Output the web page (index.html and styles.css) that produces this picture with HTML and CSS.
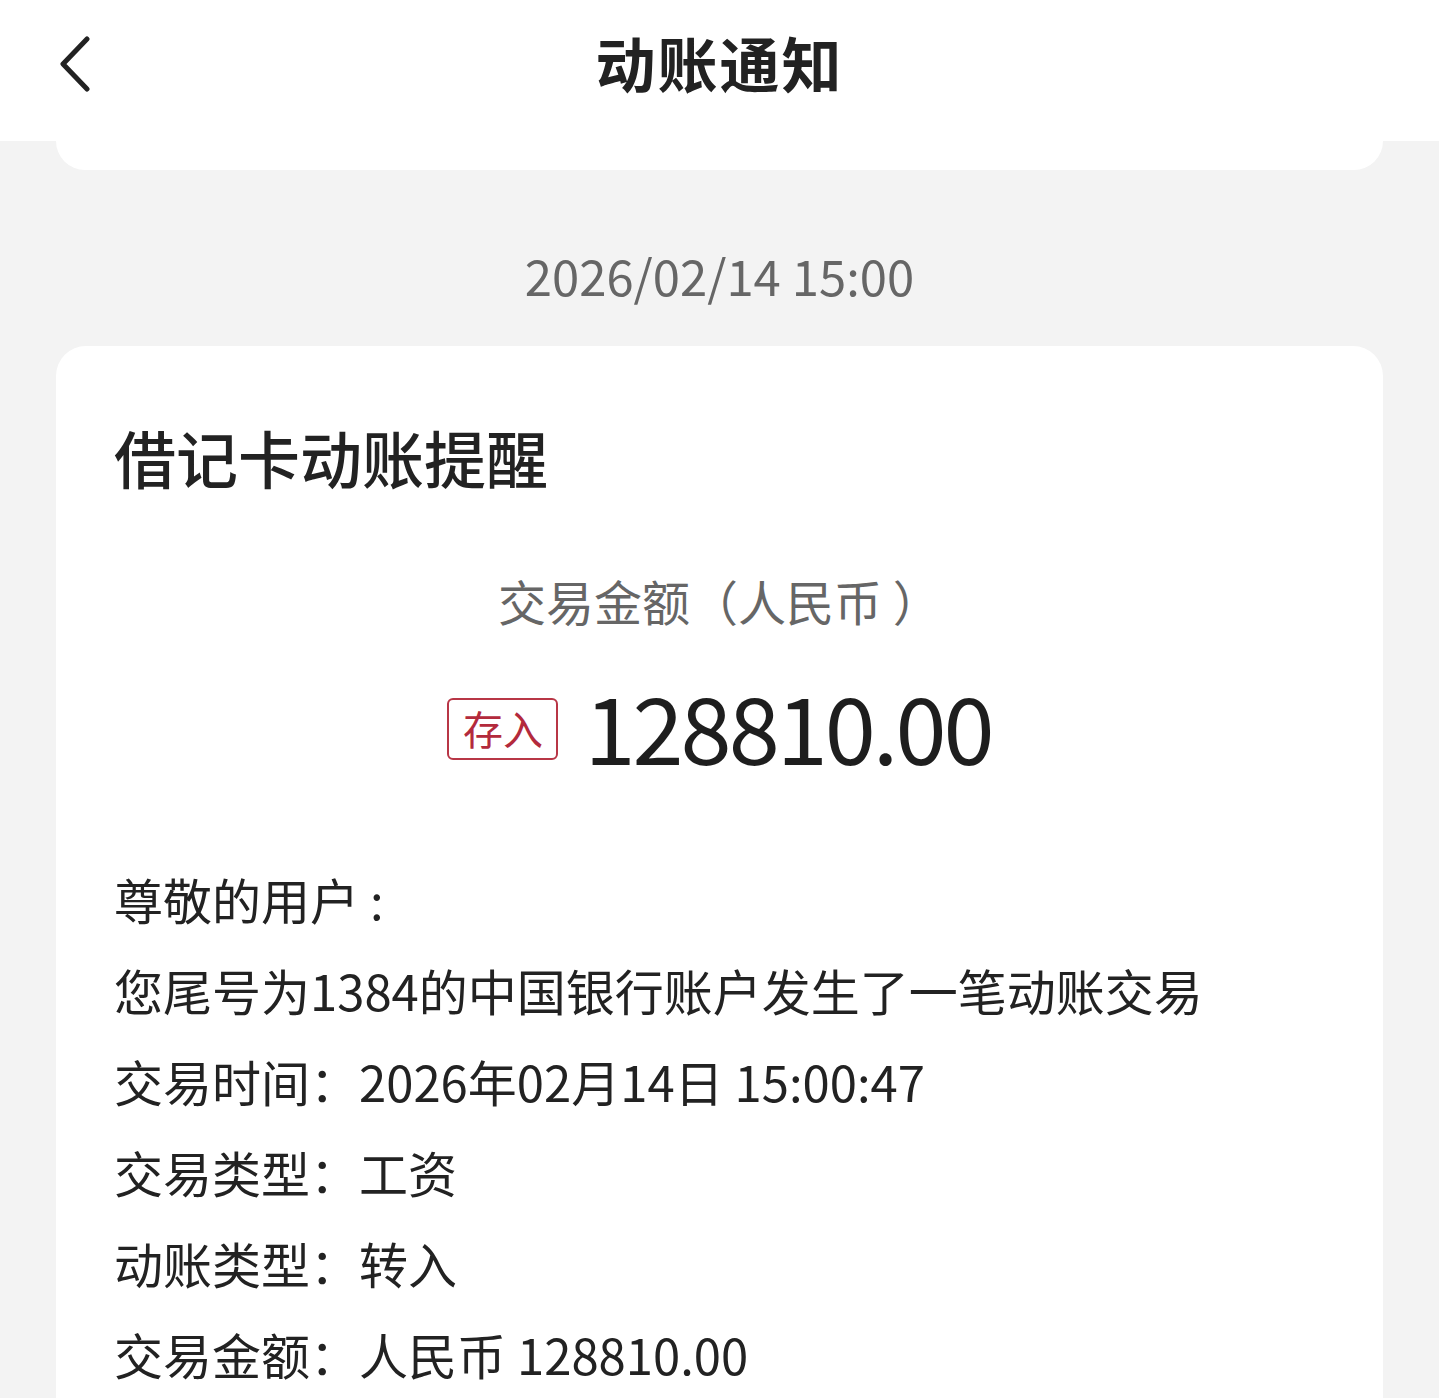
FILE: index.html
```html
<!DOCTYPE html>
<html>
  <head>
    <meta charset="utf-8">
    <meta name="viewport" content="width=device-width, initial-scale=1">
    <title>动账通知</title>
    <link rel="stylesheet" href="styles.css">
  </head>
  <body>
    <header class="topbar">
      <a class="back" href="#" aria-label="返回">
        <svg width="34" height="56" viewBox="0 0 34 56"><path d="M29 3 L5 28 L29 53" fill="none" stroke="#222" stroke-width="5" stroke-linecap="round" stroke-linejoin="round"/></svg>
      </a>
      <h1>动账通知</h1>
      <span></span>
    </header>
    <div class="prev-card"></div>
    <p class="stamp">2026/02/14 15:00</p>
    <section class="card">
      <h2>借记卡动账提醒</h2>
      <p class="label">交易金额（人民币 ）</p>
      <div class="amount">
        <span class="badge">存入</span>
        <span class="value">128810.00</span>
      </div>
      <div class="lines">
        <p>尊敬的用户 :</p>
        <p>您尾号为1384的中国银行账户发生了一笔动账交易</p>
        <p>交易时间：<span class="v">2026年02月14日 15:00:47</span></p>
        <p>交易类型：<span class="v">工资</span></p>
        <p>动账类型：<span class="v">转入</span></p>
        <p>交易金额：<span class="v">人民币 128810.00</span></p>
      </div>
    </section>
  </body>
</html>
```

FILE: styles.css
```css
body {
  margin: 0;
  background: #f3f3f3;
  font-family: "Noto Sans CJK SC", "Noto Sans", sans-serif;
  color: #222;
}

.topbar {
  height: 141px;
  background: #fff;
  display: grid;
  grid-template-columns: 1fr auto 1fr;
  align-items: center;
}

.back {
  padding-left: 58px;
  display: flex;
  align-items: center;
  padding-bottom: 14px;
}

.topbar h1 {
  margin: 0 0 18px 0;
  font-size: 60px;
  font-weight: 700;
  letter-spacing: 2px;
}

.prev-card {
  margin: 0 56px;
  height: 29px;
  background: #fff;
  border-radius: 0 0 30px 30px;
}

.stamp {
  margin: 73px 0 39px 0;
  text-align: center;
  font-size: 49px;
  line-height: 64px;
  color: #666;
}

.card {
  margin: 0 56px;
  background: #fff;
  border-radius: 30px;
  padding: 71px 58px 20px 58px;
  min-height: 1100px;
}

.card h2 {
  margin: 0;
  font-size: 62px;
  line-height: 80px;
  font-weight: 500;
}

.label {
  margin: 71px 0 0 0;
  text-align: center;
  font-size: 48px;
  line-height: 64px;
  color: #666;
}

.amount {
  margin-top: 43px;
  height: 100px;
  display: flex;
  justify-content: center;
  align-items: center;
  gap: 26px;
}

.badge {
  box-sizing: border-box;
  width: 111px;
  height: 62px;
  border: 2px solid #b83646;
  border-radius: 6px;
  color: #b32a3c;
  font-size: 40px;
  line-height: 56px;
  text-align: center;
  margin-top: 8px;
}

.value {
  font-size: 92px;
  font-weight: 400;
  letter-spacing: -3px;
  line-height: 100px;
  color: #1e1e1e;
}

.lines {
  margin-top: 78px;
}

.lines p {
  margin: 0;
  font-size: 49px;
  line-height: 91px;
}
```
